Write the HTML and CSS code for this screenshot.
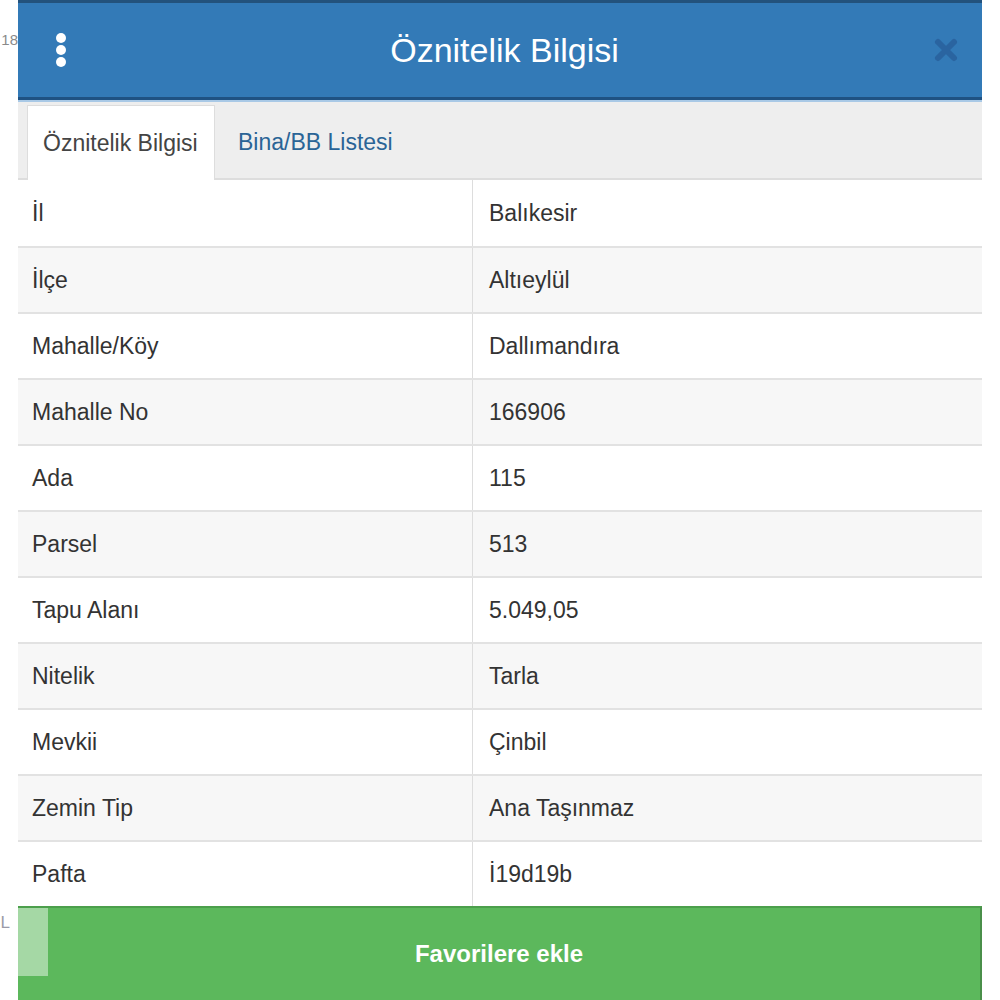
FILE: index.html
```html
<!DOCTYPE html>
<html lang="tr">

<head>
    <meta charset="UTF-8" />
    <title>Öznitelik Bilgisi</title>
    <meta name="viewport" content="width=device-width, initial-scale=1.0" />
    <link rel="stylesheet" href="styles.css">
</head>

<body>
    <div class="page">
        <div class="gutter">
            <span class="behind-num">18</span>
            <span class="behind-mark">L</span>
        </div>

        <div class="modal">
            <div class="modal-header">
                <button class="menu-btn" aria-label="Menü">
                    <svg width="14" height="34" viewBox="0 0 14 34">
                        <circle cx="7" cy="5" r="5" fill="#fff" />
                        <circle cx="7" cy="17" r="5" fill="#fff" />
                        <circle cx="7" cy="29" r="5" fill="#fff" />
                    </svg>
                </button>
                <h1 class="modal-title">Öznitelik Bilgisi</h1>
                <button class="close-btn" aria-label="Kapat">
                    <svg width="26" height="26" viewBox="0 0 26 26">
                        <path d="M5 5 L21 21 M21 5 L5 21" stroke="#2a64a0" stroke-width="6" stroke-linecap="round" />
                    </svg>
                </button>
            </div>

            <ul class="tabs">
                <li class="tab active">Öznitelik Bilgisi</li>
                <li class="tab">Bina/BB Listesi</li>
            </ul>

            <div class="attr-table">
                <div class="attr-row"><div class="attr-key">İl</div><div class="attr-val">Balıkesir</div></div>
                <div class="attr-row"><div class="attr-key">İlçe</div><div class="attr-val">Altıeylül</div></div>
                <div class="attr-row"><div class="attr-key">Mahalle/Köy</div><div class="attr-val">Dallımandıra</div></div>
                <div class="attr-row"><div class="attr-key">Mahalle No</div><div class="attr-val">166906</div></div>
                <div class="attr-row"><div class="attr-key">Ada</div><div class="attr-val">115</div></div>
                <div class="attr-row"><div class="attr-key">Parsel</div><div class="attr-val">513</div></div>
                <div class="attr-row"><div class="attr-key">Tapu Alanı</div><div class="attr-val">5.049,05</div></div>
                <div class="attr-row"><div class="attr-key">Nitelik</div><div class="attr-val">Tarla</div></div>
                <div class="attr-row"><div class="attr-key">Mevkii</div><div class="attr-val">Çinbil</div></div>
                <div class="attr-row"><div class="attr-key">Zemin Tip</div><div class="attr-val">Ana Taşınmaz</div></div>
                <div class="attr-row"><div class="attr-key">Pafta</div><div class="attr-val">İ19d19b</div></div>
            </div>

            <button class="fav-btn">Favorilere ekle</button>
        </div>

        <div class="gutter"></div>
    </div>
</body>

</html>
```

FILE: styles.css
```css
* {
    box-sizing: border-box;
}

html,
body {
    margin: 0;
    height: 1000px;
    overflow: hidden;
    background: #fff;
}

body {
    font-family: 'Liberation Sans', Arial, sans-serif;
    color: #333;
}

.page {
    display: flex;
    height: 1000px;
}

.gutter {
    width: 18px;
    flex-shrink: 0;
    display: flex;
    flex-direction: column;
    align-items: flex-end;
    overflow: hidden;
}

.behind-num {
    margin-top: 31px;
    font-size: 15px;
    color: #8a8a8a;
    white-space: nowrap;
}

.behind-mark {
    margin-top: 865px;
    margin-right: 8px;
    font-size: 17px;
    color: #9a9aa8;
}

.modal {
    width: 964px;
    flex-shrink: 0;
    display: flex;
    flex-direction: column;
    background: #fff;
}

.modal > * {
    flex-shrink: 0;
}

.modal-header {
    height: 100px;
    background: #337ab7;
    border-top: 3px solid #23527c;
    border-bottom: 3px solid #1f5283;
    box-shadow: 0 2px 0 #a9c9e6;
    display: flex;
    align-items: center;
    padding: 0 23px 0 36px;
    position: relative;
    z-index: 1;
}

.menu-btn,
.close-btn {
    background: none;
    border: none;
    padding: 0;
    display: flex;
    cursor: pointer;
}

.modal-title {
    flex: 1;
    margin: 0;
    text-align: center;
    color: #fff;
    font-size: 34px;
    font-weight: normal;
    padding-left: 8px;
}

.tabs {
    list-style: none;
    margin: 0;
    height: 80px;
    padding: 5px 0 0 9px;
    background: #eee;
    border-bottom: 2px solid #ddd;
    display: flex;
    align-items: stretch;
}

.tab {
    font-size: 23px;
    color: #2a6496;
    padding: 0 21px;
    display: flex;
    align-items: center;
    margin-bottom: -2px;
}

.tab.active {
    width: 188px;
    padding: 0 15px;
    color: #444;
    background: #fff;
    border: 1px solid #ddd;
    border-bottom: none;
    margin-right: 2px;
}

.attr-table {
    display: flex;
    flex-direction: column;
}

.attr-row {
    display: grid;
    grid-template-columns: 455px 1fr;
    height: 66px;
    border-top: 2px solid #e2e2e2;
    font-size: 23px;
}

.attr-row:first-child {
    border-top: none;
}

.attr-row:nth-child(even) {
    background: #f7f7f7;
}

.attr-key,
.attr-val {
    display: flex;
    align-items: center;
}

.attr-key {
    padding-left: 14px;
    border-right: 1px solid #ddd;
}

.attr-val {
    padding-left: 16px;
}

.fav-btn {
    position: relative;
    height: 100px;
    border: none;
    border-top: 2px solid #4c9f4c;
    border-right: 2px solid #4a8f4a;
    background: #5cb85c;
    color: #fff;
    font-family: inherit;
    font-size: 24px;
    font-weight: bold;
    padding-bottom: 8px;
    cursor: pointer;
}

.fav-btn::before {
    content: "";
    position: absolute;
    left: 0;
    top: 0;
    width: 30px;
    height: 68px;
    background: rgba(255, 255, 255, 0.45);
}
```
